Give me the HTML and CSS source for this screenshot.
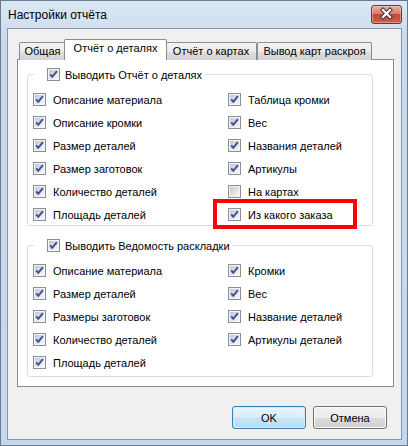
FILE: index.html
```html
<!DOCTYPE html>
<html lang="ru">
<head>
    <meta charset="UTF-8">
    <meta name="viewport" content="width=device-width, initial-scale=1.0">
    <title>Настройки отчёта</title>
    <link rel="stylesheet" href="styles.css">
</head>
<body>
    <!-- общие картинки для флажков -->
    <svg class="defs" width="0" height="0">
        <defs>
            <linearGradient id="zalivka" x1="0" y1="0" x2="1" y2="1">
                <stop offset="0" stop-color="#c3c8cf"/>
                <stop offset="1" stop-color="#f8f8f8"/>
            </linearGradient>
            <symbol id="flagPusto" viewBox="0 0 13 13">
                <rect x="0.5" y="0.5" width="12" height="12" fill="#f4f4f4" stroke="#8e8f8f"/>
                <rect x="2" y="2" width="9" height="9" fill="url(#zalivka)"/>
            </symbol>
            <symbol id="flagDa" viewBox="0 0 13 13">
                <rect x="0.5" y="0.5" width="12" height="12" fill="#f4f4f4" stroke="#8e8f8f"/>
                <rect x="2" y="2" width="9" height="9" fill="url(#zalivka)"/>
                <path d="M3.2 6.3 L5.3 8.8 L9.9 3.2" fill="none" stroke="#3d4f9c" stroke-width="2"/>
            </symbol>
        </defs>
    </svg>

    <div class="okno">
        <div class="zagolovokOkna">
            <span class="nazvanie">Настройки отчёта</span>
            <span class="knopkaZakryt">
                <svg width="29" height="17" viewBox="0 0 29 17">
                    <path d="M11 4 L18 11 M18 4 L11 11" stroke="#3a3a3a" stroke-width="4.2" stroke-linecap="square"/>
                    <path d="M11 4 L18 11 M18 4 L11 11" stroke="#fff" stroke-width="2.2" stroke-linecap="square"/>
                </svg>
            </span>
        </div>

        <div class="klient">
            <div class="vkladki">
                <div class="vkladka v1">Общая</div>
                <div class="vkladka aktivnaya">Отчёт о деталях</div>
                <div class="vkladka v3">Отчёт о картах</div>
                <div class="vkladka v4">Вывод карт раскроя</div>
            </div>

            <div class="panelVkladki">
                <fieldset class="gruppa">
                    <legend>
                        <label class="flazhok"><svg class="cb"><use href="#flagDa"/></svg>Выводить Отчёт о деталях</label>
                    </legend>
                    <div class="setka">
                        <label class="flazhok"><svg class="cb"><use href="#flagDa"/></svg>Описание материала</label>
                        <label class="flazhok"><svg class="cb"><use href="#flagDa"/></svg>Таблица кромки</label>
                        <label class="flazhok"><svg class="cb"><use href="#flagDa"/></svg>Описание кромки</label>
                        <label class="flazhok"><svg class="cb"><use href="#flagDa"/></svg>Вес</label>
                        <label class="flazhok"><svg class="cb"><use href="#flagDa"/></svg>Размер деталей</label>
                        <label class="flazhok"><svg class="cb"><use href="#flagDa"/></svg>Названия деталей</label>
                        <label class="flazhok"><svg class="cb"><use href="#flagDa"/></svg>Размер заготовок</label>
                        <label class="flazhok"><svg class="cb"><use href="#flagDa"/></svg>Артикулы</label>
                        <label class="flazhok"><svg class="cb"><use href="#flagDa"/></svg>Количество деталей</label>
                        <label class="flazhok"><svg class="cb"><use href="#flagPusto"/></svg>На картах</label>
                        <label class="flazhok"><svg class="cb"><use href="#flagDa"/></svg>Площадь деталей</label>
                        <label class="flazhok vazhnyi"><svg class="cb"><use href="#flagDa"/></svg>Из какого заказа<span class="vydelenie"></span></label>
                    </div>
                </fieldset>

                <fieldset class="gruppa">
                    <legend>
                        <label class="flazhok"><svg class="cb"><use href="#flagDa"/></svg>Выводить Ведомость раскладки</label>
                    </legend>
                    <div class="setka">
                        <label class="flazhok"><svg class="cb"><use href="#flagDa"/></svg>Описание материала</label>
                        <label class="flazhok"><svg class="cb"><use href="#flagDa"/></svg>Кромки</label>
                        <label class="flazhok"><svg class="cb"><use href="#flagDa"/></svg>Размер деталей</label>
                        <label class="flazhok"><svg class="cb"><use href="#flagDa"/></svg>Вес</label>
                        <label class="flazhok"><svg class="cb"><use href="#flagDa"/></svg>Размеры заготовок</label>
                        <label class="flazhok"><svg class="cb"><use href="#flagDa"/></svg>Название деталей</label>
                        <label class="flazhok"><svg class="cb"><use href="#flagDa"/></svg>Количество деталей</label>
                        <label class="flazhok"><svg class="cb"><use href="#flagDa"/></svg>Артикулы деталей</label>
                        <label class="flazhok"><svg class="cb"><use href="#flagDa"/></svg>Площадь деталей</label>
                    </div>
                </fieldset>
            </div>

            <div class="knopki">
                <button class="knopka osnovnaya">OK</button>
                <button class="knopka">Отмена</button>
            </div>
        </div>
    </div>
</body>
</html>
```

FILE: styles.css
```css
body {
    margin: 0;
    font-family: "Liberation Sans", Arial, sans-serif;
    font-size: 11px;
    color: #000;
    background: #fff;
}
.defs {
    position: absolute;
    width: 0;
    height: 0;
}
.okno {
    width: 408px;
    height: 446px;
    box-sizing: border-box;
    border: 1px solid #6c7c90;
    background: linear-gradient(#dbe7f4, #cadaed 40px, #c3d7ed);
    display: flex;
    flex-direction: column;
}
.zagolovokOkna {
    height: 27px;
    display: flex;
    align-items: center;
    padding-left: 7px;
    font-size: 12px;
}
.nazvanie {
    flex: 1;
}
.knopkaZakryt {
    align-self: flex-start;
    margin: 4px 5px 0 0;
    width: 31px;
    height: 19px;
    box-sizing: border-box;
    border: 1px solid #7a3027;
    border-radius: 3px;
    background: linear-gradient(#eaaa9c, #da7e6d 45%, #c8473a 50%, #cf5e4b);
    box-shadow: inset 0 0 0 1px rgba(255, 255, 255, 0.35);
}
.knopkaZakryt svg {
    display: block;
}
.klient {
    flex: 1;
    margin: 0 5px 5px 6px;
    border: 1px solid #8496ab;
    background: #f0f0f0;
    padding: 10px 7px 0 9px;
}
.vkladki {
    display: flex;
    align-items: flex-end;
    height: 21px;
    padding-left: 2px;
    margin-bottom: -1px;
}
.vkladka {
    box-sizing: border-box;
    height: 18px;
    border: 1px solid #898c95;
    border-bottom: none;
    border-radius: 2px 2px 0 0;
    background: linear-gradient(#f3f3f3, #ebebeb 50%, #dedede 51%, #d3d3d3);
    text-align: center;
    line-height: 16px;
    white-space: nowrap;
}
.v1 { width: 47px; }
.v3 { width: 92px; }
.v4 { width: 115px; }
.aktivnaya {
    position: relative;
    z-index: 1;
    width: 103px;
    height: 21px;
    margin: 0 -2px;
    background: #fff;
    line-height: 17px;
}
.panelVkladki {
    border: 1px solid #898c95;
    background: #fff;
    padding: 7px 20px 9px 9px;
}
.gruppa {
    margin: 0;
    min-width: 0;
    border: 1px solid #d5dfe5;
    border-radius: 3px;
    padding: 9px 0 2px 5px;
}
.gruppa + .gruppa {
    margin-top: 12px;
    padding-bottom: 5px;
}
.gruppa legend {
    margin-left: 1px;
    padding: 0 3px 0 13px;
}
.setka {
    display: grid;
    grid-template-columns: 195px 1fr;
    grid-auto-rows: 17px;
    row-gap: 6px;
}
.flazhok {
    display: flex;
    align-items: center;
    gap: 7px;
    height: 17px;
    white-space: nowrap;
}
legend .flazhok {
    height: 15px;
    gap: 5px;
}
.cb {
    width: 13px;
    height: 13px;
    flex: none;
}
.vazhnyi {
    position: relative;
}
.vydelenie {
    position: absolute;
    left: -15px;
    top: -7px;
    width: 144px;
    height: 30px;
    box-sizing: border-box;
    border: 4px solid #ff0000;
}
.knopki {
    display: flex;
    justify-content: flex-end;
    gap: 7px;
    margin: 19px 7px 0 0;
}
.knopka {
    width: 74px;
    height: 23px;
    padding: 0;
    font: inherit;
    color: #000;
    border: 1px solid #707070;
    border-radius: 3px;
    background: linear-gradient(#f2f2f2, #ebebeb 50%, #dddddd 51%, #cfcfcf);
    box-shadow: inset 0 0 0 1px #fbfbfb;
}
.osnovnaya {
    border-color: #3c7fb1;
    background: linear-gradient(#e9f5fc, #d8eefa 50%, #c5e5f6 51%, #b8dff3);
    box-shadow: inset 0 0 0 1px #d2edfa;
}
```
